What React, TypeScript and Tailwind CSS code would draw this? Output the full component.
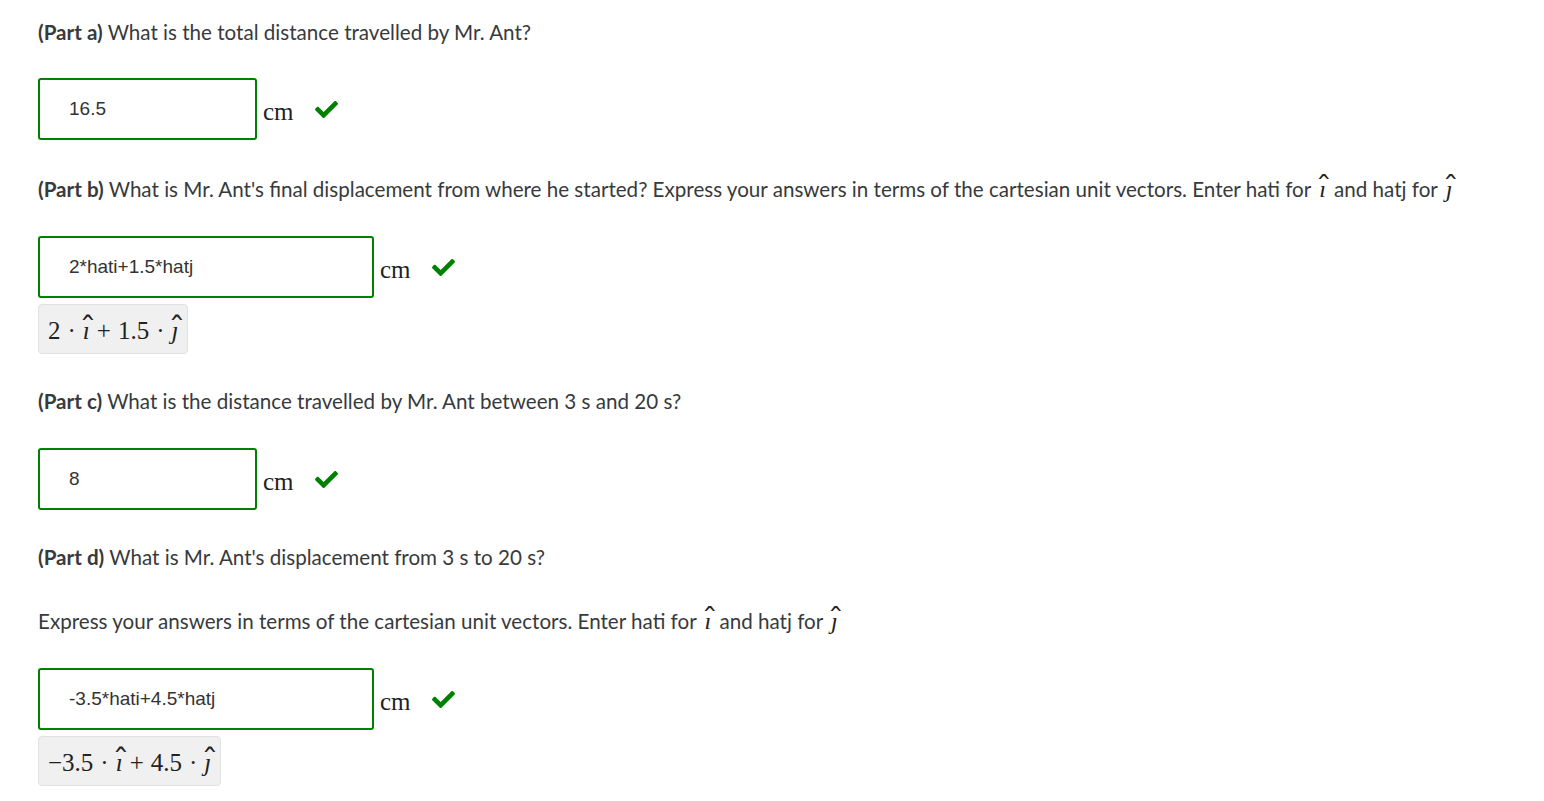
import React from "react";
import { FaCheck } from "react-icons/fa";

const Hat = ({ c }: { c: string }) => (
  <span className="relative inline-block italic leading-none">
    {c}
    <span className="absolute left-1/2 top-[-0.16em] -translate-x-[38%] scale-x-[1.15] not-italic font-['DejaVu_Serif',serif] text-[1.2em] leading-none">ˆ</span>
  </span>
);

const MathText = ({ children }: { children: React.ReactNode }) => (
  <span className="font-['Liberation_Serif',serif] text-[24px] text-[#222] mx-[3px] leading-none">{children}</span>
);

const Question = ({ part, children }: { part: string; children: React.ReactNode }) => (
  <p className="leading-[28px]">
    <span className="font-bold">(Part {part})</span> {children}
  </p>
);

const AnswerRow = ({ value, wide }: { value: string; wide?: boolean }) => (
  <div className="flex items-center">
    <div
      className={
        "h-[62px] border-2 border-[#008000] rounded-[3px] flex items-center pl-[29px] font-['Liberation_Sans',sans-serif] text-[19px] text-[#333] " +
        (wide ? "w-[336px]" : "w-[219px]")
      }
    >
      {value}
    </div>
    <span className="ml-[6px] mt-[5px] font-['Liberation_Serif',serif] text-[25px] text-[#222]">cm</span>
    <FaCheck className="ml-[21px] text-[#008000] w-[23px] h-[23px]" />
  </div>
);

const Op = ({ c }: { c: string }) => <span className="mx-[7px]">{c}</span>;

const Preview = ({ children }: { children: React.ReactNode }) => (
  <div className="mt-[6px] inline-flex items-center h-[50px] px-[9px] pt-[3px] bg-[#f0f0f0] border border-[#e2e2e2] rounded-[4px] font-['Liberation_Serif',serif] text-[25px] text-[#222]">
    {children}
  </div>
);

export default function App() {
  return (
    <div className="min-h-screen bg-white pl-[38px] pt-[18px] font-['Source_Sans_Pro','Lato',sans-serif] text-[20.6px] text-[#373a3c]">
      <Question part="a">What is the total distance travelled by Mr. Ant?</Question>
      <div className="mt-[32px]">
        <AnswerRow value="16.5" />
      </div>

      <div className="mt-[35px]">
        <Question part="b">
          What is Mr. Ant's final displacement from where he started? Express your answers in terms of the cartesian unit
          vectors. Enter hati for{" "}
          <MathText>
            <Hat c="ı" />
          </MathText>{" "}
          and hatj for{" "}
          <MathText>
            <Hat c="ȷ" />
          </MathText>
        </Question>
      </div>
      <div className="mt-[33px]">
        <AnswerRow value="2*hati+1.5*hatj" wide />
        <Preview>
          <span>2</span>
          <Op c="·" />
          <Hat c="ı" />
          <Op c="+" />
          <span>1.5</span>
          <Op c="·" />
          <Hat c="ȷ" />
        </Preview>
      </div>

      <div className="mt-[33px]">
        <Question part="c">What is the distance travelled by Mr. Ant between 3 s and 20 s?</Question>
      </div>
      <div className="mt-[33px]">
        <AnswerRow value="8" />
      </div>

      <div className="mt-[33px]">
        <Question part="d">What is Mr. Ant's displacement from 3 s to 20 s?</Question>
      </div>
      <p className="mt-[36px] leading-[28px]">
        Express your answers in terms of the cartesian unit vectors. Enter hati for{" "}
        <MathText>
          <Hat c="ı" />
        </MathText>{" "}
        and hatj for{" "}
        <MathText>
          <Hat c="ȷ" />
        </MathText>
      </p>
      <div className="mt-[33px]">
        <AnswerRow value="-3.5*hati+4.5*hatj" wide />
        <Preview>
          <span>−3.5</span>
          <Op c="·" />
          <Hat c="ı" />
          <Op c="+" />
          <span>4.5</span>
          <Op c="·" />
          <Hat c="ȷ" />
        </Preview>
      </div>
    </div>
  );
}
